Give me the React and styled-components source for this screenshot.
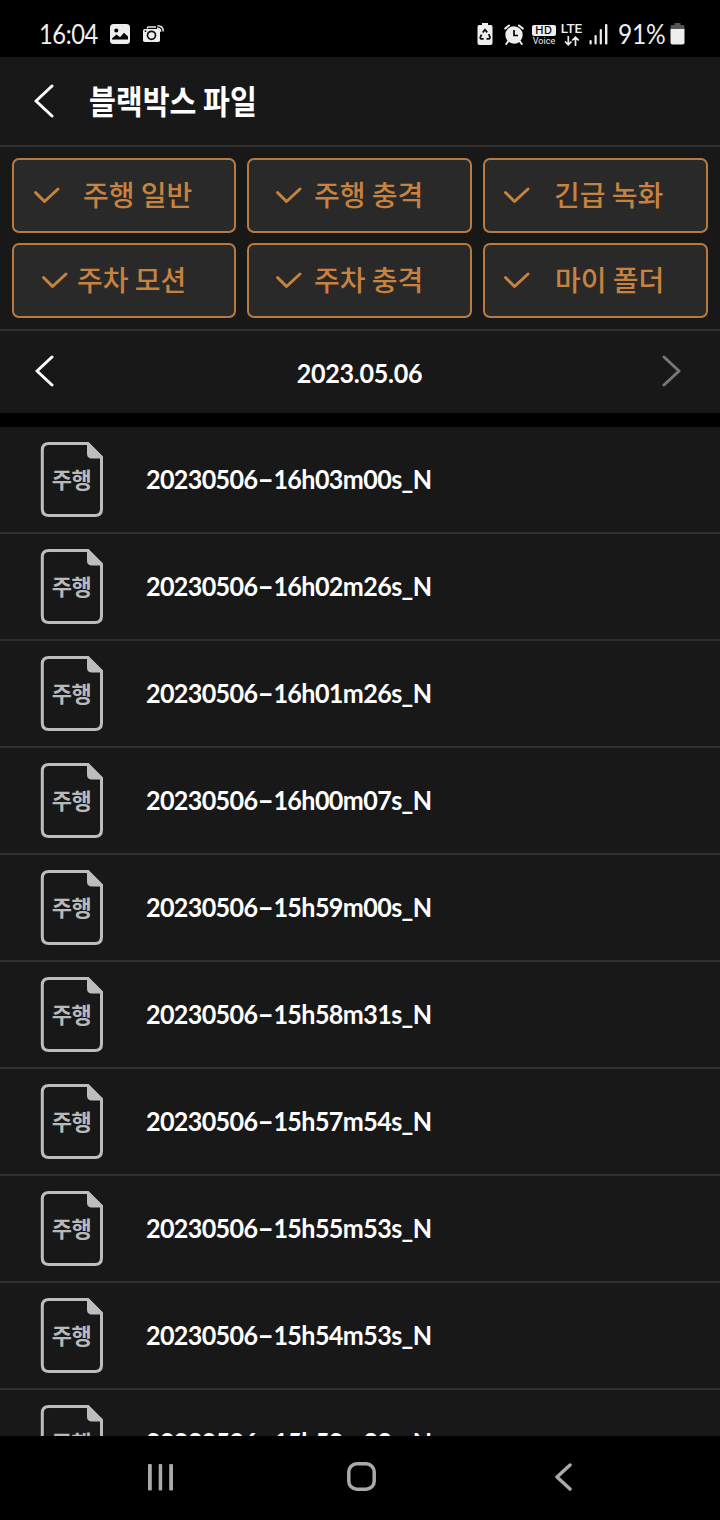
import styled, { createGlobalStyle } from "styled-components";

const GlobalStyle = createGlobalStyle`
  * {
    box-sizing: border-box;
  }

  body {
    margin: 0;
    background: #000;
  }
`;

const Screen = styled.div`
  width: 720px;
  height: 1520px;
  display: flex;
  flex-direction: column;
  overflow: hidden;
  background: #000;
  color: #fff;
  font-family: Lato, "Noto Sans CJK KR", sans-serif;

  svg {
    display: block;
    flex: none;
  }
`;

const StatusBar = styled.div`
  height: 57px;
  flex: none;
  display: flex;
  align-items: flex-start;
  justify-content: space-between;
  padding: 20px 35px 0 39px;
  color: #eee;
`;

const StatusGroup = styled.div`
  display: flex;
  align-items: center;
  height: 28px;
`;

const Clock = styled.span`
  width: 71px;
  font-size: 27px;
  line-height: 28px;
  letter-spacing: -0.5px;
  white-space: nowrap;
  transform: scaleX(0.88);
  transform-origin: left center;
`;

const Battery = styled.span`
  width: 52px;
  font-size: 27px;
  line-height: 28px;
  letter-spacing: -0.3px;
  white-space: nowrap;
  transform: scaleX(0.91);
  transform-origin: left center;
`;

const Network = styled.div`
  width: ${(props) => props.$width}px;
  height: 24px;
  display: flex;
  flex-direction: column;
  align-items: center;
  justify-content: space-between;
  margin-right: ${(props) => props.$gap}px;
`;

const HdBadge = styled.span`
  width: 24px;
  height: 11px;
  border-radius: 2px;
  margin-top: 3px;
  background: #eee;
  color: #000;
  font: 500 11px/11px Inter, sans-serif;
  letter-spacing: 0.6px;
  text-align: center;
`;

const VoiceText = styled.span`
  font: 400 9px/9px Roboto, sans-serif;
`;

const LteText = styled.span`
  font: 500 13.5px/13px Roboto, sans-serif;
`;

const Header = styled.header`
  height: 90px;
  flex: none;
  display: flex;
  align-items: center;
  padding-left: 34px;
  background: #181818;
  border-bottom: 2px solid #303030;
`;

const Title = styled.h1`
  margin: 0 0 3px 35px;
  font: 700 33px/44px "Noto Sans CJK KR", sans-serif;
  white-space: nowrap;
  transform: scaleX(0.885);
  transform-origin: left center;
`;

const Filters = styled.div`
  height: 184px;
  flex: none;
  display: grid;
  grid-template-columns: 224px 225px 225px;
  grid-template-rows: 75px 75px;
  gap: 10px 11px;
  padding: 11px 12px;
  background: #181818;
  border-bottom: 2px solid #303030;
`;

const FilterButton = styled.button`
  display: flex;
  align-items: center;
  gap: ${(props) => props.$gap}px;
  margin: 0;
  padding: 0 0 0 ${(props) => props.$start}px;
  border: 2px solid #b97a42;
  border-radius: 7px;
  background: #29292a;
  color: #c7823f;
  font: 500 28px/40px "Noto Sans CJK KR", sans-serif;
  white-space: nowrap;
`;

const FilterLabel = styled.span`
  padding-bottom: 3px;
`;

const DateBar = styled.div`
  height: 82px;
  flex: none;
  display: flex;
  align-items: center;
  justify-content: space-between;
  padding: 0 39px 2px 35px;
  background: #181818;
`;

const DateText = styled.span`
  font-size: 27px;
  font-weight: 700;
  line-height: 32px;
  letter-spacing: -0.3px;
  margin: 4px 0 0 4px;
  transform: scaleX(0.93);
`;

const FileList = styled.div`
  height: 1009px;
  flex: none;
  margin-top: 14px;
  overflow: hidden;
  background: #181818;
`;

const FileRow = styled.div`
  height: 107px;
  display: flex;
  align-items: center;
  padding-left: 40px;
  border-bottom: 2px solid #303030;
`;

const FileIcon = styled.div`
  display: grid;
  width: 63px;
  height: 75px;
  margin-right: 43px;

  > * {
    grid-area: 1 / 1;
  }
`;

const FileKind = styled.span`
  place-self: center;
  padding-bottom: 3px;
  color: #b9b9b9;
  font: 700 22px/30px "Noto Sans CJK KR", sans-serif;
  letter-spacing: -0.6px;
`;

const FileName = styled.div`
  display: flex;
  padding-bottom: 2px;
  font-size: 27px;
  font-weight: 700;
  line-height: 32px;
  white-space: nowrap;
  transform: scaleX(0.93);
  transform-origin: left center;
`;

const FileDate = styled.span`
  width: 120px;
  letter-spacing: -0.7px;
`;

const Dash = styled.span`
  width: 17px;
  transform: scaleX(1.75);
  transform-origin: left center;
`;

const FileTime = styled.span`
  letter-spacing: -0.65px;
`;

const NavBar = styled.nav`
  height: 84px;
  flex: none;
  display: flex;
  align-items: center;
  padding: 0 0 3px 147px;
`;

const NavButton = styled.div`
  width: ${(props) => props.$width}px;
`;

const filters = [
  { label: "주행 일반", start: 19, gap: 22 },
  { label: "주행 충격", start: 26, gap: 11 },
  { label: "긴급 녹화", start: 18, gap: 23 },
  { label: "주차 모션", start: 27, gap: 8 },
  { label: "주차 충격", start: 26, gap: 11 },
  { label: "마이 폴더", start: 18, gap: 24 },
];

const times = [
  "16h03m00s_N",
  "16h02m26s_N",
  "16h01m26s_N",
  "16h00m07s_N",
  "15h59m00s_N",
  "15h58m31s_N",
  "15h57m54s_N",
  "15h55m53s_N",
  "15h54m53s_N",
  "15h52m33s_N",
];

const Chevron = ({ right, color = "#fff", width = 19, height = 32, stroke = 3 }) => (
  <svg
    width={width}
    height={height}
    viewBox={`0 0 ${width} ${height}`}
    fill="none"
    stroke={color}
    strokeWidth={stroke}
    strokeLinecap="round"
    strokeLinejoin="round"
  >
    <path
      d={
        right
          ? `M2 2L${width - 2} ${height / 2}L2 ${height - 2}`
          : `M${width - 2} 2L2 ${height / 2}L${width - 2} ${height - 2}`
      }
    />
  </svg>
);

const CheckIcon = () => (
  <svg width="28" height="20" viewBox="0 0 28 20" fill="none">
    <path
      d="M2.5 6.5L11.5 15.5L25 3"
      stroke="#c7823f"
      strokeWidth="3"
      strokeLinecap="round"
      strokeLinejoin="round"
    />
  </svg>
);

const PhotoIcon = () => (
  <svg width="20" height="20" viewBox="0 0 20 20">
    <rect width="20" height="20" rx="3.5" fill="#eee" />
    <circle cx="6.3" cy="6.4" r="2" fill="#000" />
    <path d="M2 14.5L6.5 10.5L10 13.3L14 8.8L18 12.5V15.5H2Z" fill="#000" />
  </svg>
);

const CameraIcon = () => (
  <svg width="22" height="18" viewBox="0 0 22 18" fill="none" style={{ marginLeft: 13 }}>
    <path d="M4 3.5L5 2H13" stroke="#eee" strokeWidth="1.3" />
    <rect y="4" width="17" height="13" rx="1.8" fill="#eee" />
    <circle cx="8.5" cy="10.3" r="4" stroke="#111" strokeWidth="1.7" />
    <circle cx="2.5" cy="6.2" r="0.9" fill="#111" />
    <path d="M14 3.3C16.2 3.3 17.7 4.6 17.7 6.7M14.5 0.8C18 0.8 20.2 3 20.2 6.5" stroke="#eee" strokeWidth="1.4" />
  </svg>
);

const RecycleBatteryIcon = () => (
  <svg width="16" height="22" viewBox="0 0 16 22" style={{ marginRight: 11 }}>
    <path d="M5 0H11V2H14Q15.5 2 15.5 4V20Q15.5 22 13.5 22H2.5Q0.5 22 0.5 20V4Q0.5 2 2 2H5Z" fill="#eee" />
    <path
      d="M5.7 9.5L8 6.7L10.2 9.3M11.7 11.2L12.9 14Q13.2 15.8 11.5 15.8H9.5M6.7 15.8H4.5Q2.8 15.5 3.4 14L4.5 11.6"
      fill="none"
      stroke="#111"
      strokeWidth="1.8"
    />
  </svg>
);

const AlarmIcon = () => (
  <svg width="20" height="21" viewBox="0 0 20 21" style={{ marginRight: 8 }}>
    <circle cx="10" cy="11" r="8.7" fill="#eee" />
    <path
      d="M1.2 4.6L5 1.5M18.8 4.6L15 1.5M4 17.5L2.2 20M16 17.5L17.8 20"
      stroke="#eee"
      strokeWidth="2"
      strokeLinecap="round"
    />
    <path d="M10 6V11.5H14" fill="none" stroke="#000" strokeWidth="1.7" />
  </svg>
);

const DataArrows = () => (
  <svg width="16" height="10" viewBox="0 0 16 10" fill="none" stroke="#eee" strokeWidth="1.7">
    <path d="M4.3 0V8.5M1 5.5L4.3 8.8L7.5 5.5M11.5 10V1.5M8.2 4.5L11.5 1.2L14.8 4.5" />
  </svg>
);

const SignalIcon = () => (
  <svg width="19" height="21" viewBox="0 0 19 21" fill="#eee" style={{ marginRight: 10 }}>
    <rect x="0.5" y="16" width="2.2" height="4.5" rx="1" />
    <rect x="5.5" y="11" width="2.2" height="9.5" rx="1" />
    <rect x="10.7" y="5" width="2.2" height="15.5" rx="1" />
    <rect x="16" y="0" width="2.4" height="20.5" rx="1" />
  </svg>
);

const BatteryIcon = () => (
  <svg width="15" height="22" viewBox="0 0 15 22">
    <path d="M4.5 0H10.5V2H13Q14.5 2 14.5 4V6H0.5V4Q0.5 2 2 2H4.5Z" fill="#555" />
    <path d="M0.5 6H14.5V19.5Q14.5 21.5 12.5 21.5H2.5Q0.5 21.5 0.5 19.5Z" fill="#eee" />
  </svg>
);

const DocumentShape = () => (
  <svg width="63" height="75" viewBox="0 0 63 75" fill="none">
    <path
      d="M47.5 1.5H9Q2.3 1.5 2.3 8V67Q2.3 73.5 9 73.5H55Q61.5 73.5 61.5 67V15.5Z"
      stroke="#bdbdbd"
      strokeWidth="3"
    />
    <path d="M47 0H48.5L63 14.5V16.5H52Q47 16.5 47 11.5Z" fill="#bdbdbd" />
  </svg>
);

const App = () => (
  <>
    <GlobalStyle />
    <Screen>
      <StatusBar>
        <StatusGroup>
          <Clock>16:04</Clock>
          <PhotoIcon />
          <CameraIcon />
        </StatusGroup>
        <StatusGroup>
          <RecycleBatteryIcon />
          <AlarmIcon />
          <Network $width={24} $gap={5}>
            <HdBadge>HD</HdBadge>
            <VoiceText>Voice</VoiceText>
          </Network>
          <Network $width={21} $gap={7}>
            <LteText>LTE</LteText>
            <DataArrows />
          </Network>
          <SignalIcon />
          <Battery>91%</Battery>
          <BatteryIcon />
        </StatusGroup>
      </StatusBar>
      <Header>
        <Chevron width={20} height={34} />
        <Title>블랙박스 파일</Title>
      </Header>
      <Filters>
        {filters.map(({ label, start, gap }) => (
          <FilterButton key={label} $start={start} $gap={gap}>
            <CheckIcon />
            <FilterLabel>{label}</FilterLabel>
          </FilterButton>
        ))}
      </Filters>
      <DateBar>
        <Chevron />
        <DateText>2023.05.06</DateText>
        <Chevron right color="#777" />
      </DateBar>
      <FileList>
        {times.map((time) => (
          <FileRow key={time}>
            <FileIcon>
              <DocumentShape />
              <FileKind>주행</FileKind>
            </FileIcon>
            <FileName>
              <FileDate>20230506</FileDate>
              <Dash>-</Dash>
              <FileTime>{time}</FileTime>
            </FileName>
          </FileRow>
        ))}
      </FileList>
      <NavBar>
        <NavButton $width={200}>
          <svg width="27" height="28" viewBox="0 0 27 28" fill="#aaa">
            <rect x="1" y="1" width="3.8" height="26.5" rx="1" />
            <rect x="11.7" y="1" width="3.5" height="26.5" rx="1" />
            <rect x="22.2" y="1" width="3.8" height="26.5" rx="1" />
          </svg>
        </NavButton>
        <NavButton $width={208}>
          <svg width="29" height="29" viewBox="0 0 29 29" fill="none">
            <rect x="1.8" y="1.8" width="25.4" height="25.4" rx="8" stroke="#aaa" strokeWidth="3.5" />
          </svg>
        </NavButton>
        <NavButton $width={17}>
          <Chevron color="#aaa" width={17} height={28} stroke={3.5} />
        </NavButton>
      </NavBar>
    </Screen>
  </>
);

export default App;
